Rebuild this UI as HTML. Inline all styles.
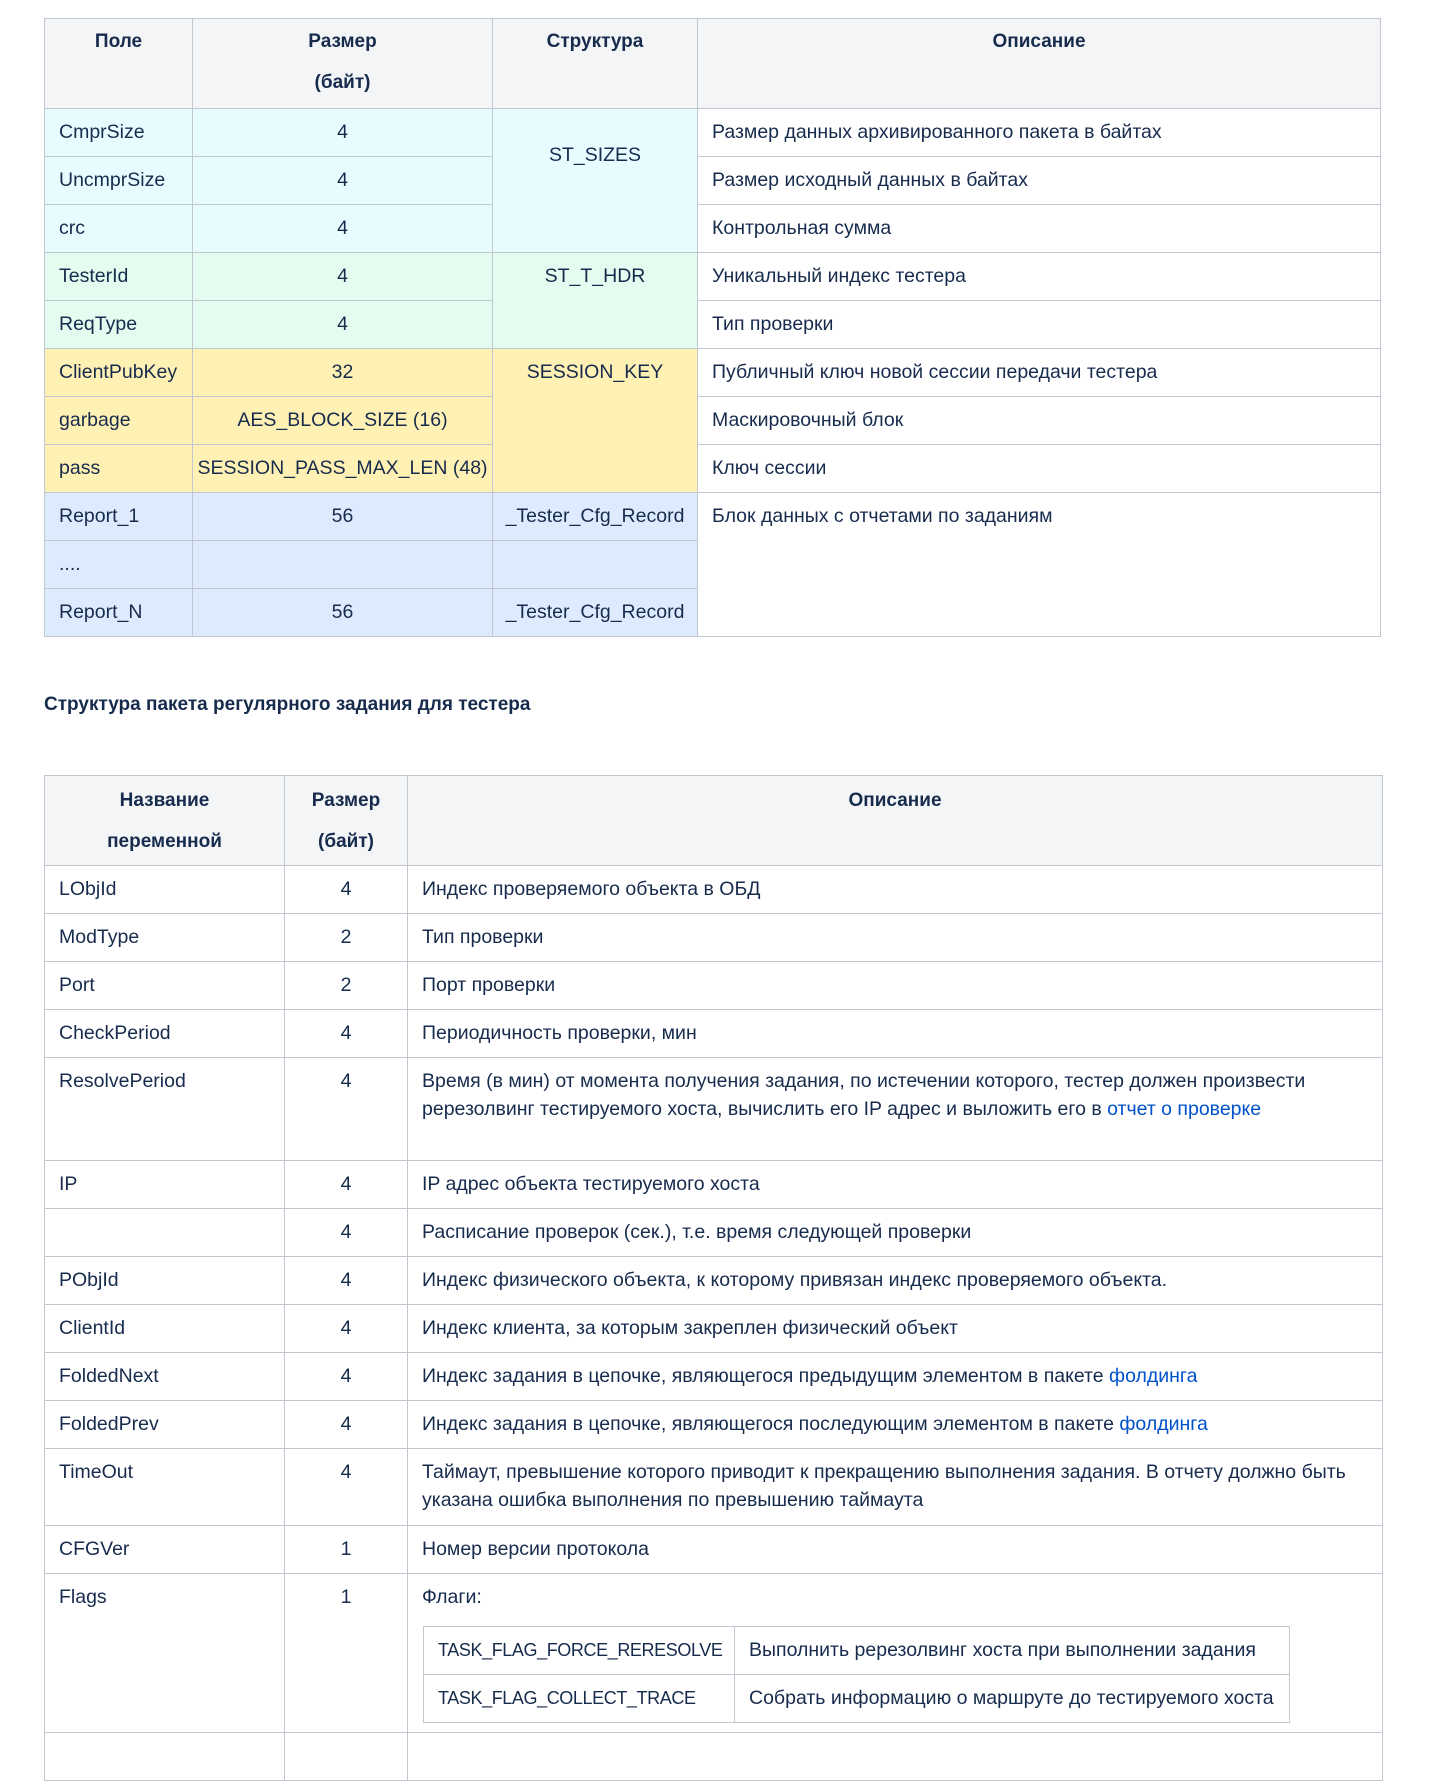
<!DOCTYPE html>
<html><head><meta charset="utf-8"><style>
*{box-sizing:border-box;margin:0;padding:0}
body{width:1446px;height:1743px;background:#fff;font-family:"Liberation Sans","DejaVu Sans",sans-serif;font-size:19.5px;color:#172b4d;position:relative;overflow:hidden}
table{border-collapse:collapse;table-layout:fixed;position:absolute}
td,th{border:1px solid #c1c7d0;vertical-align:top;padding:9px 14px 0 14px;line-height:28px;white-space:nowrap;overflow:hidden}
th{background:#f4f5f7;font-weight:bold;text-align:center;line-height:41px;padding-top:2px;font-size:19px}
.c{text-align:center}
.cy{background:#e6fcff}.gr{background:#e3fcef}.ye{background:#fff0b3}.bl{background:#deebff}
tr{height:48px}
a{color:#0052cc;text-decoration:none}
h4{position:absolute;left:44px;top:691px;font-size:19px;font-weight:bold;line-height:28px}
.n td:first-child{font-size:18px;letter-spacing:-0.4px}
</style></head><body>
<table style="left:44px;top:18px;width:1336px">
<colgroup><col style="width:148px"><col style="width:300px"><col style="width:205px"><col style="width:683px"></colgroup>
<tr style="height:90px"><th>Поле</th><th>Размер<br>(байт)</th><th>Структура</th><th>Описание</th></tr>
<tr><td class="cy">CmprSize</td><td class="cy c">4</td><td class="cy c" rowspan="3" style="padding-top:32px">ST_SIZES</td><td>Размер данных архивированного пакета в байтах</td></tr>
<tr><td class="cy">UncmprSize</td><td class="cy c">4</td><td>Размер исходный данных в байтах</td></tr>
<tr><td class="cy">crc</td><td class="cy c">4</td><td>Контрольная сумма</td></tr>
<tr><td class="gr">TesterId</td><td class="gr c">4</td><td class="gr c" rowspan="2">ST_T_HDR</td><td>Уникальный индекс тестера</td></tr>
<tr><td class="gr">ReqType</td><td class="gr c">4</td><td>Тип проверки</td></tr>
<tr><td class="ye">ClientPubKey</td><td class="ye c">32</td><td class="ye c" rowspan="3">SESSION_KEY</td><td>Публичный ключ новой сессии передачи тестера</td></tr>
<tr><td class="ye">garbage</td><td class="ye c">AES_BLOCK_SIZE (16)</td><td>Маскировочный блок</td></tr>
<tr><td class="ye">pass</td><td class="ye c" style="padding:9px 4px 0">SESSION_PASS_MAX_LEN (48)</td><td>Ключ сессии</td></tr>
<tr><td class="bl">Report_1</td><td class="bl c">56</td><td class="bl c" style="padding:9px 4px 0">_Tester_Cfg_Record</td><td rowspan="3">Блок данных с отчетами по заданиям</td></tr>
<tr><td class="bl">....</td><td class="bl c"></td><td class="bl c"></td></tr>
<tr><td class="bl">Report_N</td><td class="bl c">56</td><td class="bl c" style="padding:9px 4px 0">_Tester_Cfg_Record</td></tr>
</table>
<h4>Структура пакета регулярного задания для тестера</h4>
<table style="left:44px;top:775px;width:1338px">
<colgroup><col style="width:240px"><col style="width:123px"><col style="width:975px"></colgroup>
<tr style="height:90px"><th style="padding-top:4px">Название<br>переменной</th><th style="padding-top:4px">Размер<br>(байт)</th><th style="padding-top:4px">Описание</th></tr>
<tr><td>LObjId</td><td class="c">4</td><td>Индекс проверяемого объекта в ОБД</td></tr>
<tr><td>ModType</td><td class="c">2</td><td>Тип проверки</td></tr>
<tr><td>Port</td><td class="c">2</td><td>Порт проверки</td></tr>
<tr><td>CheckPeriod</td><td class="c">4</td><td>Периодичность проверки, мин</td></tr>
<tr style="height:103px"><td>ResolvePeriod</td><td class="c">4</td><td>Время (в мин) от момента получения задания, по истечении которого, тестер должен произвести<br>ререзолвинг тестируемого хоста, вычислить его IP адрес и выложить его в <a>отчет о проверке</a></td></tr>
<tr><td>IP</td><td class="c">4</td><td>IP адрес объекта тестируемого хоста</td></tr>
<tr><td></td><td class="c">4</td><td>Расписание проверок (сек.), т.е. время следующей проверки</td></tr>
<tr><td>PObjId</td><td class="c">4</td><td>Индекс физического объекта, к которому привязан индекс проверяемого объекта.</td></tr>
<tr><td>ClientId</td><td class="c">4</td><td>Индекс клиента, за которым закреплен физический объект</td></tr>
<tr><td>FoldedNext</td><td class="c">4</td><td>Индекс задания в цепочке, являющегося предыдущим элементом в пакете <a>фолдинга</a></td></tr>
<tr><td>FoldedPrev</td><td class="c">4</td><td>Индекс задания в цепочке, являющегося последующим элементом в пакете <a>фолдинга</a></td></tr>
<tr style="height:77px"><td>TimeOut</td><td class="c">4</td><td>Таймаут, превышение которого приводит к прекращению выполнения задания. В отчету должно быть<br>указана ошибка выполнения по превышению таймаута</td></tr>
<tr><td>CFGVer</td><td class="c">1</td><td>Номер версии протокола</td></tr>
<tr style="height:159px"><td>Flags</td><td class="c">1</td><td>Флаги:</td></tr>
<tr><td></td><td></td><td></td></tr>
</table>
<table class="n" style="left:423px;top:1626px;width:866px">
<colgroup><col style="width:311px"><col style="width:555px"></colgroup>
<tr><td>TASK_FLAG_FORCE_RERESOLVE</td><td>Выполнить ререзолвинг хоста при выполнении задания</td></tr>
<tr><td>TASK_FLAG_COLLECT_TRACE</td><td>Собрать информацию о маршруте до тестируемого хоста</td></tr>
</table>
</body></html>
